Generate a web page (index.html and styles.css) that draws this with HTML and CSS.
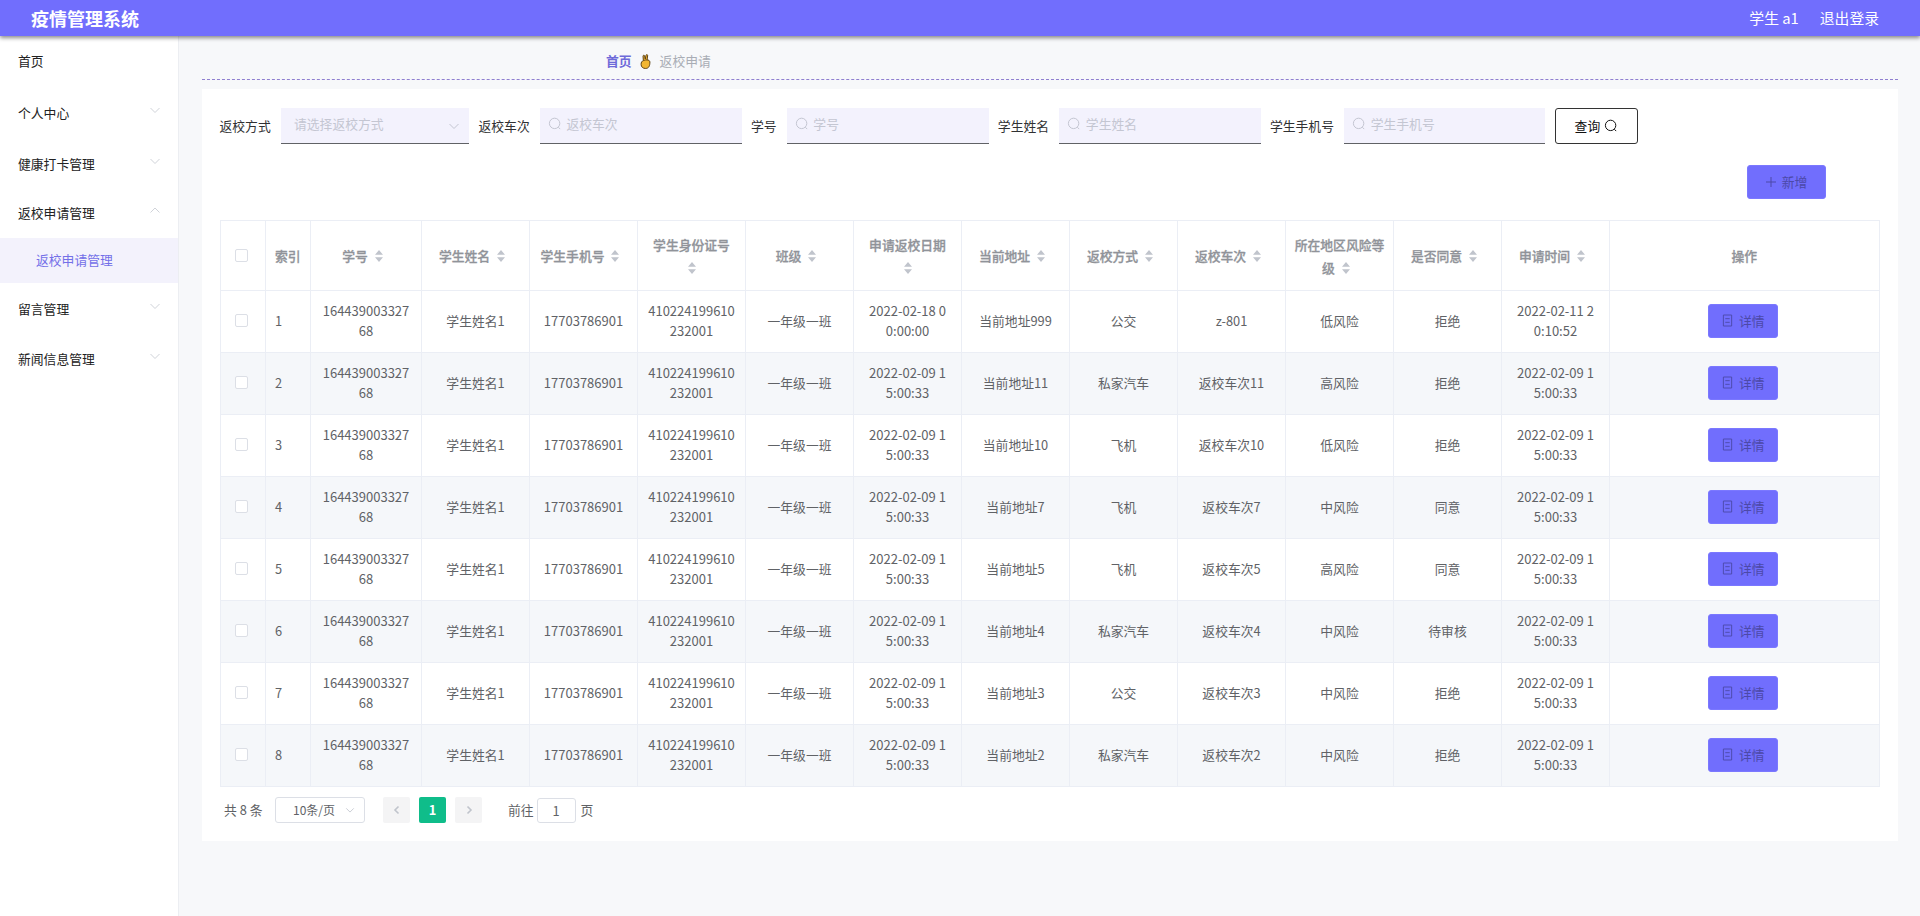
FILE: index.html
```html
<!DOCTYPE html>
<html lang="zh-CN">
<head>
<meta charset="utf-8">
<title>疫情管理系统</title>
<link rel="stylesheet" href="styles.css">
</head>
<body>
<svg class="defs" width="0" height="0" aria-hidden="true">
  <symbol id="i-search" viewBox="0 0 14 14"><circle cx="6.600" cy="6.400" r="5.200" fill="none" stroke="currentColor" stroke-width="1"/><path d="M10.300 10.200l1.900 1.900" fill="none" stroke="currentColor" stroke-width="1"/></symbol>
  <symbol id="i-down" viewBox="0 0 12 12"><path d="M1.500 4l4.500 4.500L10.500 4" fill="none" stroke="currentColor" stroke-width="1"/></symbol>
  <symbol id="i-up" viewBox="0 0 12 12"><path d="M1.500 8.500L6 4l4.500 4.500" fill="none" stroke="currentColor" stroke-width="1"/></symbol>
  <symbol id="i-doc" viewBox="0 0 12 14"><path d="M1.500 1h9v12h-9zM3.600 5h4.800M3.600 9h4.800" fill="none" stroke="currentColor" stroke-width="1"/></symbol>
  <symbol id="i-plus" viewBox="0 0 12 12"><path d="M6 1v10M1 6h10" fill="none" stroke="currentColor" stroke-width="1"/></symbol>
  <symbol id="i-sort" viewBox="0 0 22 14"><path d="M11 1l4 4.800H7zM11 13L7 8.200h8z" fill="currentColor"/></symbol>
</svg>
<header class="topbar">
  <div class="brand">疫情管理系统</div>
  <div class="user"><span>学生 a1</span><span>退出登录</span></div>
</header>
<div class="page">
  <nav class="side">
    <div class="nav nav-first"><span>首页</span></div>
    <div class="nav nav-tall"><span>个人中心</span><svg class="chev"><use href="#i-down"/></svg></div>
    <div class="nav nav-tall"><span>健康打卡管理</span><svg class="chev"><use href="#i-down"/></svg></div>
    <div class="nav"><span>返校申请管理</span><svg class="chev"><use href="#i-up"/></svg></div>
    <div class="nav-sub">返校申请管理</div>
    <div class="nav"><span>留言管理</span><svg class="chev"><use href="#i-down"/></svg></div>
    <div class="nav"><span>新闻信息管理</span><svg class="chev"><use href="#i-down"/></svg></div>
  </nav>
  <main class="main">
    <div class="crumb">
      <span class="crumb-home">首页</span>
      <svg class="hand" viewBox="0 0 10 14" aria-hidden="true"><path d="M3 6.200L2.700 2c0-1 1.300-1.200 1.500-.2l.6 3 .7-3.600c.2-1 1.600-.8 1.500.3L6.500 5.600c1.300-.1 2.600.5 2.600 1.900 0 3-.7 6-4 6-2.600 0-4.200-1.400-4.200-3.900 0-1.800.7-3 2.100-3.400z" fill="#f2b632" stroke="#5a3d10" stroke-width=".9"/><path d="M3 6.200c1.200-.5 2.400-.6 3.500-.6" fill="none" stroke="#5a3d10" stroke-width=".7"/></svg>
      <span class="crumb-cur">返校申请</span>
    </div>
    <section class="card">
      <form class="filters">
        <label class="flabel">返校方式</label>
        <div class="field field-select"><span>请选择返校方式</span><svg class="sel-arrow"><use href="#i-down"/></svg></div>
        <label class="flabel">返校车次</label>
        <div class="field field-a"><svg class="mag"><use href="#i-search"/></svg><span>返校车次</span></div>
        <label class="flabel">学号</label>
        <div class="field field-b"><svg class="mag"><use href="#i-search"/></svg><span>学号</span></div>
        <label class="flabel">学生姓名</label>
        <div class="field field-c"><svg class="mag"><use href="#i-search"/></svg><span>学生姓名</span></div>
        <label class="flabel">学生手机号</label>
        <div class="field field-d"><svg class="mag"><use href="#i-search"/></svg><span>学生手机号</span></div>
        <button type="button" class="query">查询<svg class="mag-btn"><use href="#i-search"/></svg></button>
      </form>
      <div class="actions">
        <button type="button" class="btn btn-add"><svg class="ic-plus"><use href="#i-plus"/></svg>新增</button>
      </div>
      <table class="grid">
        <colgroup><col class="c-sel"><col class="c-sel"><col class="c-id"><col class="c-n"><col class="c-n"><col class="c-n"><col class="c-n"><col class="c-n"><col class="c-n"><col class="c-n"><col class="c-n"><col class="c-n"><col class="c-n"><col class="c-n"><col></colgroup>
        <thead>
          <tr>
            <th><i class="check"></i></th>
            <th class="left">索引</th>
            <th>学号<svg class="sort"><use href="#i-sort"/></svg></th>
            <th>学生姓名<svg class="sort"><use href="#i-sort"/></svg></th>
            <th>学生手机号<svg class="sort"><use href="#i-sort"/></svg></th>
            <th>学生身份证号<svg class="sort"><use href="#i-sort"/></svg></th>
            <th>班级<svg class="sort"><use href="#i-sort"/></svg></th>
            <th>申请返校日期<svg class="sort"><use href="#i-sort"/></svg></th>
            <th>当前地址<svg class="sort"><use href="#i-sort"/></svg></th>
            <th>返校方式<svg class="sort"><use href="#i-sort"/></svg></th>
            <th>返校车次<svg class="sort"><use href="#i-sort"/></svg></th>
            <th>所在地区风险等级<svg class="sort"><use href="#i-sort"/></svg></th>
            <th>是否同意<svg class="sort"><use href="#i-sort"/></svg></th>
            <th>申请时间<svg class="sort"><use href="#i-sort"/></svg></th>
            <th>操作</th>
          </tr>
        </thead>
        <tbody>
          <tr><td><i class="check"></i></td><td class="left">1</td><td>16443900332768</td><td>学生姓名1</td><td>17703786901</td><td>410224199610232001</td><td>一年级一班</td><td>2022-02-18 00:00:00</td><td>当前地址999</td><td>公交</td><td>z-801</td><td>低风险</td><td>拒绝</td><td>2022-02-11 20:10:52</td><td><button type="button" class="btn btn-row"><svg class="ic-doc"><use href="#i-doc"/></svg>详情</button></td></tr>
          <tr><td><i class="check"></i></td><td class="left">2</td><td>16443900332768</td><td>学生姓名1</td><td>17703786901</td><td>410224199610232001</td><td>一年级一班</td><td>2022-02-09 15:00:33</td><td>当前地址11</td><td>私家汽车</td><td>返校车次11</td><td>高风险</td><td>拒绝</td><td>2022-02-09 15:00:33</td><td><button type="button" class="btn btn-row"><svg class="ic-doc"><use href="#i-doc"/></svg>详情</button></td></tr>
          <tr><td><i class="check"></i></td><td class="left">3</td><td>16443900332768</td><td>学生姓名1</td><td>17703786901</td><td>410224199610232001</td><td>一年级一班</td><td>2022-02-09 15:00:33</td><td>当前地址10</td><td>飞机</td><td>返校车次10</td><td>低风险</td><td>拒绝</td><td>2022-02-09 15:00:33</td><td><button type="button" class="btn btn-row"><svg class="ic-doc"><use href="#i-doc"/></svg>详情</button></td></tr>
          <tr><td><i class="check"></i></td><td class="left">4</td><td>16443900332768</td><td>学生姓名1</td><td>17703786901</td><td>410224199610232001</td><td>一年级一班</td><td>2022-02-09 15:00:33</td><td>当前地址7</td><td>飞机</td><td>返校车次7</td><td>中风险</td><td>同意</td><td>2022-02-09 15:00:33</td><td><button type="button" class="btn btn-row"><svg class="ic-doc"><use href="#i-doc"/></svg>详情</button></td></tr>
          <tr><td><i class="check"></i></td><td class="left">5</td><td>16443900332768</td><td>学生姓名1</td><td>17703786901</td><td>410224199610232001</td><td>一年级一班</td><td>2022-02-09 15:00:33</td><td>当前地址5</td><td>飞机</td><td>返校车次5</td><td>高风险</td><td>同意</td><td>2022-02-09 15:00:33</td><td><button type="button" class="btn btn-row"><svg class="ic-doc"><use href="#i-doc"/></svg>详情</button></td></tr>
          <tr><td><i class="check"></i></td><td class="left">6</td><td>16443900332768</td><td>学生姓名1</td><td>17703786901</td><td>410224199610232001</td><td>一年级一班</td><td>2022-02-09 15:00:33</td><td>当前地址4</td><td>私家汽车</td><td>返校车次4</td><td>中风险</td><td>待审核</td><td>2022-02-09 15:00:33</td><td><button type="button" class="btn btn-row"><svg class="ic-doc"><use href="#i-doc"/></svg>详情</button></td></tr>
          <tr><td><i class="check"></i></td><td class="left">7</td><td>16443900332768</td><td>学生姓名1</td><td>17703786901</td><td>410224199610232001</td><td>一年级一班</td><td>2022-02-09 15:00:33</td><td>当前地址3</td><td>公交</td><td>返校车次3</td><td>中风险</td><td>拒绝</td><td>2022-02-09 15:00:33</td><td><button type="button" class="btn btn-row"><svg class="ic-doc"><use href="#i-doc"/></svg>详情</button></td></tr>
          <tr><td><i class="check"></i></td><td class="left">8</td><td>16443900332768</td><td>学生姓名1</td><td>17703786901</td><td>410224199610232001</td><td>一年级一班</td><td>2022-02-09 15:00:33</td><td>当前地址2</td><td>私家汽车</td><td>返校车次2</td><td>中风险</td><td>拒绝</td><td>2022-02-09 15:00:33</td><td><button type="button" class="btn btn-row"><svg class="ic-doc"><use href="#i-doc"/></svg>详情</button></td></tr>
        </tbody>
      </table>
      <div class="pager">
        <span class="total">共 8 条</span>
        <div class="sizes"><span>10条/页</span><svg class="sizes-arrow"><use href="#i-down"/></svg></div>
        <div class="pg-nav"><svg class="pg-chev" viewBox="0 0 12 12"><path d="M7.500 2.500L4 6l3.500 3.500" fill="none" stroke="currentColor" stroke-width="1.600"/></svg></div>
        <div class="pg-cur">1</div>
        <div class="pg-nav"><svg class="pg-chev" viewBox="0 0 12 12"><path d="M4.500 2.500L8 6l-3.500 3.500" fill="none" stroke="currentColor" stroke-width="1.600"/></svg></div>
        <span class="goto">前往</span>
        <div class="jump">1</div>
        <span class="page-word">页</span>
      </div>
    </section>
  </main>
</div>
</body>
</html>
```
FILE: styles.css
```css
* { box-sizing: border-box; }
html, body { margin: 0; padding: 0; }
body {
  width: 1920px;
  height: 916px;
  overflow: hidden;
  font: 12.800px/20px "Noto Sans CJK SC", "Noto Sans", sans-serif;
  color: #606266;
  background: #f7f8fa;
}
.defs { position: absolute; }
svg { display: block; flex: none; }

.topbar {
  position: relative;
  z-index: 2;
  height: 36px;
  display: flex;
  align-items: center;
  justify-content: space-between;
  padding: 0 41px 0 31px;
  background: #716efd;
  color: #fff;
  box-shadow: 0 2px 4px rgba(0, 0, 0, .45);
}
.brand { font-size: 18px; font-weight: 700; }
.user { display: flex; gap: 21px; font-size: 14.800px; }

.page { display: flex; height: 880px; }
.side {
  width: 179px;
  flex: none;
  background: #fff;
  border-right: 1px solid #eceef2;
  color: #222;
}
.nav {
  height: 50px;
  display: flex;
  align-items: center;
  justify-content: space-between;
  padding: 0 17px 2px 18px;
}
.nav-first { margin-bottom: 1px; padding-bottom: 0; }
.nav-tall { height: 51px; padding-bottom: 0; }
.chev { width: 12px; height: 12px; margin-bottom: 6px; color: #d0d3d9; }
.nav-sub {
  height: 45px;
  line-height: 43px;
  padding-left: 36px;
  margin-top: -1px;
  margin-bottom: 2px;
  background: #f3f2fc;
  color: #7470e8;
}

.main { flex: 1; padding: 0 22.500px 0 23px; }
.crumb {
  height: 44px;
  display: flex;
  align-items: center;
  padding: 7px 0 0 404px;
  border-bottom: 1px dashed #8f7fd0;
}
.crumb-home { color: #6e6ad9; font-weight: 700; }
.hand { width: 11px; height: 15px; margin: 0 9px 0 8px; }
.crumb-cur { color: #a9adb5; }

.card {
  margin-top: 9px;
  height: 752px;
  padding: 19px 18px 18px;
  background: #fff;
}
.filters { display: flex; align-items: center; gap: 9px; height: 36px; margin: 0 0 0 -.500px; }
.flabel { color: #303133; white-space: nowrap; margin-right: 1.300px; }
.field {
  height: 36px;
  display: flex;
  align-items: center;
  gap: 4.500px;
  padding: 0 0 4px 8px;
  background: #f3f2fd;
  border-bottom: 1px solid #606266;
  color: #c4c6d2;
}
.field-select { width: 188.500px; padding-left: 13px; justify-content: space-between; padding-right: 9px; }
.field-a, .field-b { width: 202px; }
.field-c { width: 201.600px; }
.field-d { width: 201.200px; }
.mag { width: 14px; height: 14px; }
.sel-arrow { width: 12px; height: 12px; margin-top: 4px; }
.query {
  width: 83px;
  height: 36px;
  display: flex;
  align-items: center;
  justify-content: center;
  gap: 4px;
  padding: 0;
  margin-left: .500px;
  font: inherit;
  color: #111;
  background: #fff;
  border: 1px solid #333;
  border-radius: 3px;
}
.mag-btn { width: 14px; height: 14px; }

.actions { display: flex; justify-content: flex-end; margin: 21px 54px 21px 0; }
.btn {
  display: flex;
  align-items: center;
  justify-content: center;
  height: 34px;
  padding: 0;
  font: inherit;
  color: #4c49a8;
  background: #716efd;
  border: 1px solid #7b78ff;
  border-radius: 3px;
}
.btn-add { width: 79px; gap: 5px; }
.btn-row { width: 70px; gap: 6px; margin: 0 auto; }
.ic-plus { width: 12px; height: 12px; }
.ic-doc { width: 11px; height: 13px; }

.grid {
  width: 100%;
  table-layout: fixed;
  border-collapse: separate;
  border-spacing: 0;
  border-top: 1px solid #ebeef5;
  border-left: 1px solid #ebeef5;
}
.c-sel { width: 45px; }
.c-id { width: 111px; }
.c-n { width: 108px; }
.grid th, .grid td {
  padding: 0 10px;
  text-align: center;
  border-right: 1px solid #ebeef5;
  border-bottom: 1px solid #ebeef5;
  word-break: break-all;
}
.grid th {
  height: 70px;
  padding: 0 8px;
  line-height: 23px;
  font-weight: 500;
  color: #909399;
  -webkit-text-stroke: .3px #909399;
}
.grid td { height: 62px; padding-bottom: 2px; }
.grid td:nth-child(3), .grid td:nth-child(5), .grid td:nth-child(6),
.grid td:nth-child(8), .grid td:nth-child(14) { font-size: 13px; }
.grid td:last-child { padding: 0 11px 2px 9px; }
.grid th.left, .grid td.left { text-align: left; padding: 0 0 0 9px; }
.grid td.left { padding-bottom: 2px; }
.grid tbody tr:nth-child(even) td { background: #f5f7fa; }
.sort { display: inline-block; width: 22px; height: 14px; vertical-align: -2px; color: #c0c4cc; }
.check {
  display: block;
  width: 13px;
  height: 13px;
  margin-left: 4px;
  background: #fff;
  border: 1px solid #dcdfe6;
  border-radius: 2px;
}
.grid th .check { margin-left: 6px; }

.pager { display: flex; align-items: center; height: 26px; margin-top: 10px; padding-left: 4px; color: #606266; }
.total { width: 51px; }
.sizes {
  width: 90px;
  height: 26px;
  display: flex;
  align-items: center;
  justify-content: space-between;
  padding: 0 9px 0 17px;
  font-size: 12px;
  border: 1px solid #dcdfe6;
  border-radius: 3px;
}
.sizes-arrow { width: 10px; height: 10px; color: #c0c4cc; }
.pg-nav, .pg-cur {
  width: 27px;
  height: 26px;
  display: flex;
  align-items: center;
  justify-content: center;
  border-radius: 2px;
}
.pg-nav { background: #f4f4f5; color: #c0c4cc; }
.sizes + .pg-nav { margin-left: 18px; }
.pg-cur { margin: 0 9px; background: #0fbd8a; color: #fff; font-weight: 700; }
.pg-chev { width: 12px; height: 12px; }
.goto { margin-left: 26px; }
.jump {
  width: 39px;
  height: 25px;
  margin: 0 5px 0 3px;
  line-height: 23px;
  text-align: center;
  border: 1px solid #dcdfe6;
  border-radius: 3px;
}
```
